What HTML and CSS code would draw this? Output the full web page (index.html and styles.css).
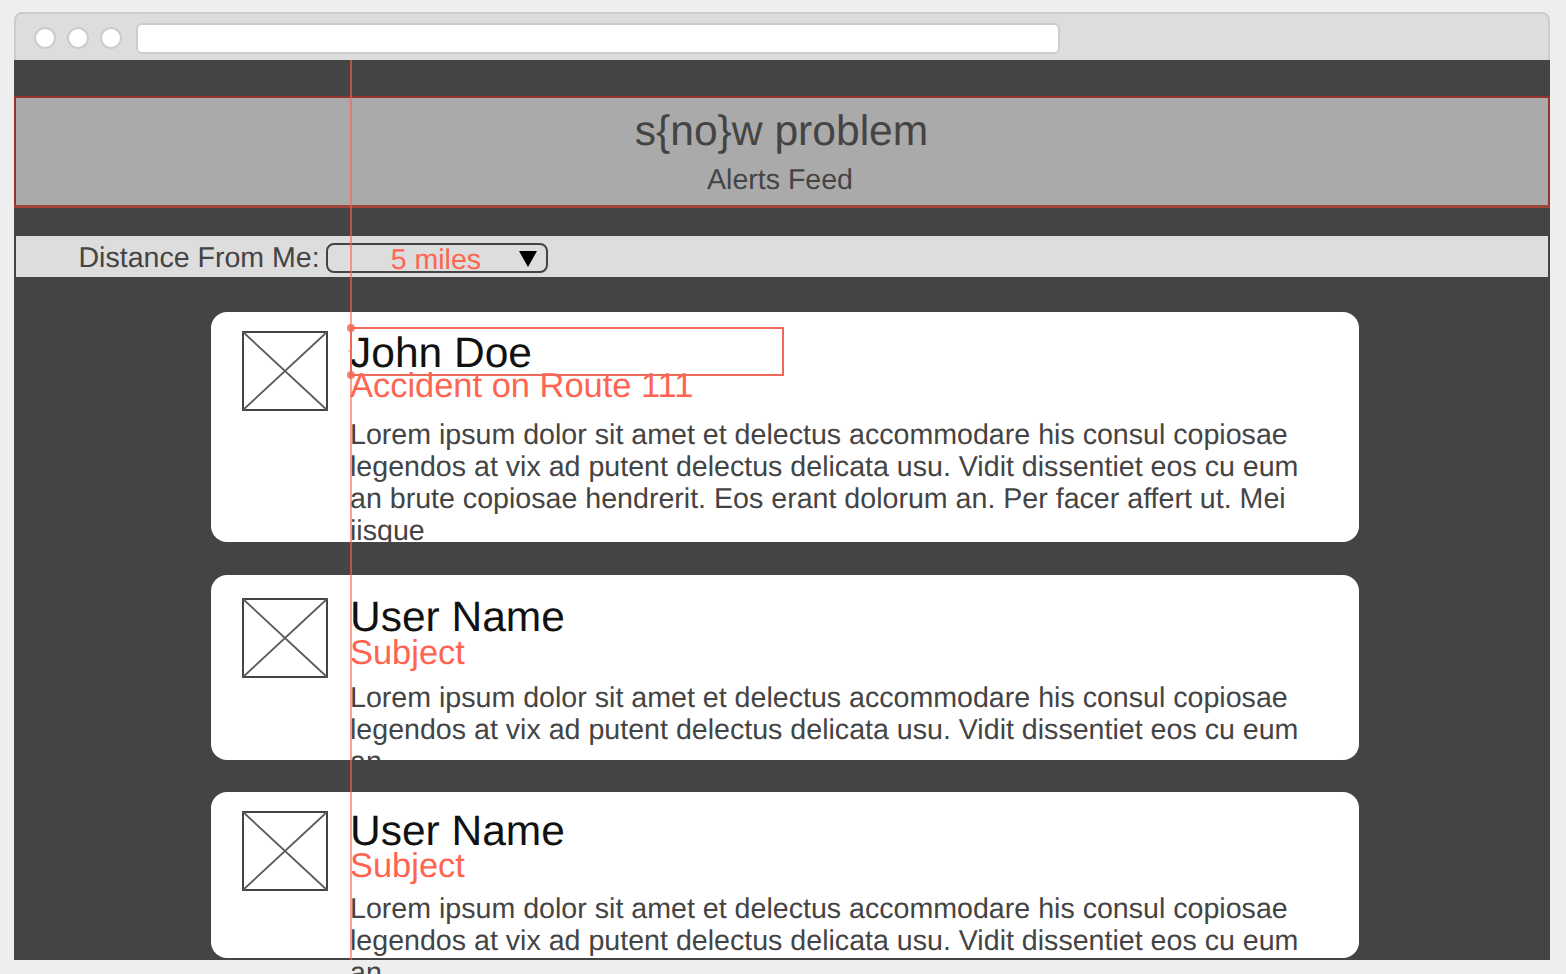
FILE: index.html
```html
<!DOCTYPE html>
<html lang="en">
<head>
<meta charset="utf-8">
<title>s{no}w problem</title>
<link rel="stylesheet" href="styles.css">
</head>
<body>
<div class="window">
  <div class="chrome">
    <span class="dot"></span><span class="dot"></span><span class="dot"></span>
    <div class="address"></div>
  </div>
  <div class="screen">
    <header class="head">
      <h1 class="title">s{no}w problem</h1>
      <p class="subtitle">Alerts Feed</p>
    </header>
    <div class="filter">
      <span class="filter-label">Distance From Me:</span>
      <div class="select"><span class="select-value">5 miles</span><span class="select-arrow"></span></div>
    </div>
    <main class="feed">
      <article class="card card-one">
        <svg class="thumb" viewBox="0 0 86 80" aria-hidden="true"><rect x="1" y="1" width="84" height="78" class="thumb-box"/><path d="M1 1L85 79M85 1L1 79" class="thumb-x"/></svg>
        <div class="body">
          <h2 class="name">John Doe</h2>
          <h3 class="subject">Accident on Route 111</h3>
          <p class="text">Lorem ipsum dolor sit amet et delectus accommodare his consul copiosae legendos at vix ad putent delectus delicata usu. Vidit dissentiet eos cu eum an brute copiosae hendrerit. Eos erant dolorum an. Per facer affert ut. Mei iisque</p>
        </div>
      </article>
      <article class="card card-two">
        <svg class="thumb" viewBox="0 0 86 80" aria-hidden="true"><rect x="1" y="1" width="84" height="78" class="thumb-box"/><path d="M1 1L85 79M85 1L1 79" class="thumb-x"/></svg>
        <div class="body">
          <h2 class="name">User Name</h2>
          <h3 class="subject">Subject</h3>
          <p class="text">Lorem ipsum dolor sit amet et delectus accommodare his consul copiosae legendos at vix ad putent delectus delicata usu. Vidit dissentiet eos cu eum an</p>
        </div>
      </article>
      <article class="card card-three">
        <svg class="thumb" viewBox="0 0 86 80" aria-hidden="true"><rect x="1" y="1" width="84" height="78" class="thumb-box"/><path d="M1 1L85 79M85 1L1 79" class="thumb-x"/></svg>
        <div class="body">
          <h2 class="name">User Name</h2>
          <h3 class="subject">Subject</h3>
          <p class="text">Lorem ipsum dolor sit amet et delectus accommodare his consul copiosae legendos at vix ad putent delectus delicata usu. Vidit dissentiet eos cu eum an</p>
        </div>
      </article>
    </main>
    <div class="guide"></div>
    <div class="selection">
      <span class="handle handle-top"></span>
      <span class="handle-mid"></span>
      <span class="handle handle-bottom"></span>
    </div>
  </div>
</div>
</body>
</html>
```
FILE: styles.css
```css
* { box-sizing: border-box; }
html, body { margin: 0; height: 974px; overflow: hidden; background: #eeeeee; }
body { font-family: "Liberation Sans", Arial, sans-serif; color: #444444; text-rendering: geometricPrecision; }
.window { margin: 12px 16px 0 14px; }
.chrome {
  height: 48px;
  background: #dddddd;
  border: 2px solid #cccccc;
  border-bottom: 0;
  border-radius: 8px 8px 0 0;
  display: flex;
  align-items: center;
  padding: 2px 0 0 18px;
}
.dot {
  width: 22px; height: 22px; border-radius: 50%;
  background: #ffffff; border: 2px solid #cccccc;
  margin-right: 11px;
}
.address {
  width: 924px; height: 31px; margin-left: 3px;
  background: #ffffff; border: 2px solid #cccccc; border-radius: 6px;
}
.screen {
  position: relative;
  height: 900px;
  background: #444444;
  padding-top: 36px;
}
.head {
  height: 112px;
  background: #aaaaaa;
  border: 2px solid #93352d;
  border-bottom: 3px solid #a0453c;
  text-align: center;
  padding-top: 9px;
}
.title { margin: 0; font-size: 42.6px; font-weight: 400; line-height: 48px; padding-right: 1px; }
.subtitle { margin: 8px 0 0; font-size: 28.56px; line-height: 34px; padding-right: 4px; }
.filter {
  height: 41px;
  margin: 28px 2px 0;
  background: #dddddd;
  display: flex;
  align-items: center;
  padding-left: 62.5px;
}
.filter-label { font-size: 28.56px; line-height: 32px; margin-top: 2px; }
.select {
  width: 222px; height: 30px; margin-left: 6px; margin-top: 3px;
  border: 2px solid #444444; border-radius: 8px;
  display: flex; align-items: center;
  padding-left: 63px;
}
.select-value { color: #ff6450; font-size: 28.56px; line-height: 26px; width: 128px; margin-top: 4px; }
.select-arrow {
  width: 0; height: 0; margin-top: 1px;
  border-left: 9px solid transparent;
  border-right: 9px solid transparent;
  border-top: 16px solid #000000;
}
.feed { padding: 35px 191px 0 197px; }
.card {
  background: #ffffff;
  border-radius: 16px;
  display: flex;
  align-items: flex-start;
  padding-left: 31px;
}
.card-one { height: 230px; padding-top: 19px; }
.card-two { height: 185px; margin-top: 33px; padding-top: 23px; }
.card-three { height: 166px; margin-top: 32px; padding-top: 19px; }
.thumb { width: 86px; height: 80px; flex: none; display: block; }
.thumb-box { fill: #ffffff; stroke: #444444; stroke-width: 2; }
.thumb-x { fill: none; stroke: #5c5c5c; stroke-width: 1.8; }
.body { width: 970px; margin-left: 22px; }
.name { margin: 0; font-size: 42.5px; font-weight: 400; line-height: 48px; color: #111111; }
.subject { font-size: 34.45px; font-weight: 400; line-height: 40px; color: #ff6450; }
.text { font-size: 28.6px; line-height: 32px; color: #444444; }
.card-one .body { margin-top: -1px; }
.card-one .subject { margin: -12px 0 0; }
.card-one .text { margin: 13px 0 0; }
.card-two .body { margin-top: -4px; }
.card-two .subject { margin: -9px 0 0; }
.card-two .text { margin: 9px 0 0; }
.card-three .body { margin-top: -3px; }
.card-three .subject { margin: -10px 0 0; }
.card-three .text { margin: 7px 0 0; }
.guide {
  position: absolute; left: 336px; top: 0; width: 2px; height: 900px;
  background: rgba(255, 100, 80, 0.6);
}
.selection {
  position: absolute; left: 336px; top: 267px; width: 434px; height: 49px;
  border: 2px solid #f0685a;
}
.handle {
  position: absolute; left: -5px; width: 8px; height: 8px; border-radius: 50%;
  background: rgba(240, 104, 90, 0.85);
}
.handle-top { top: -5px; }
.handle-bottom { bottom: -5px; }
.handle-mid {
  position: absolute; left: -4px; top: 21px; width: 4px; height: 2px;
  background: rgba(240, 104, 90, 0.4);
}
```
